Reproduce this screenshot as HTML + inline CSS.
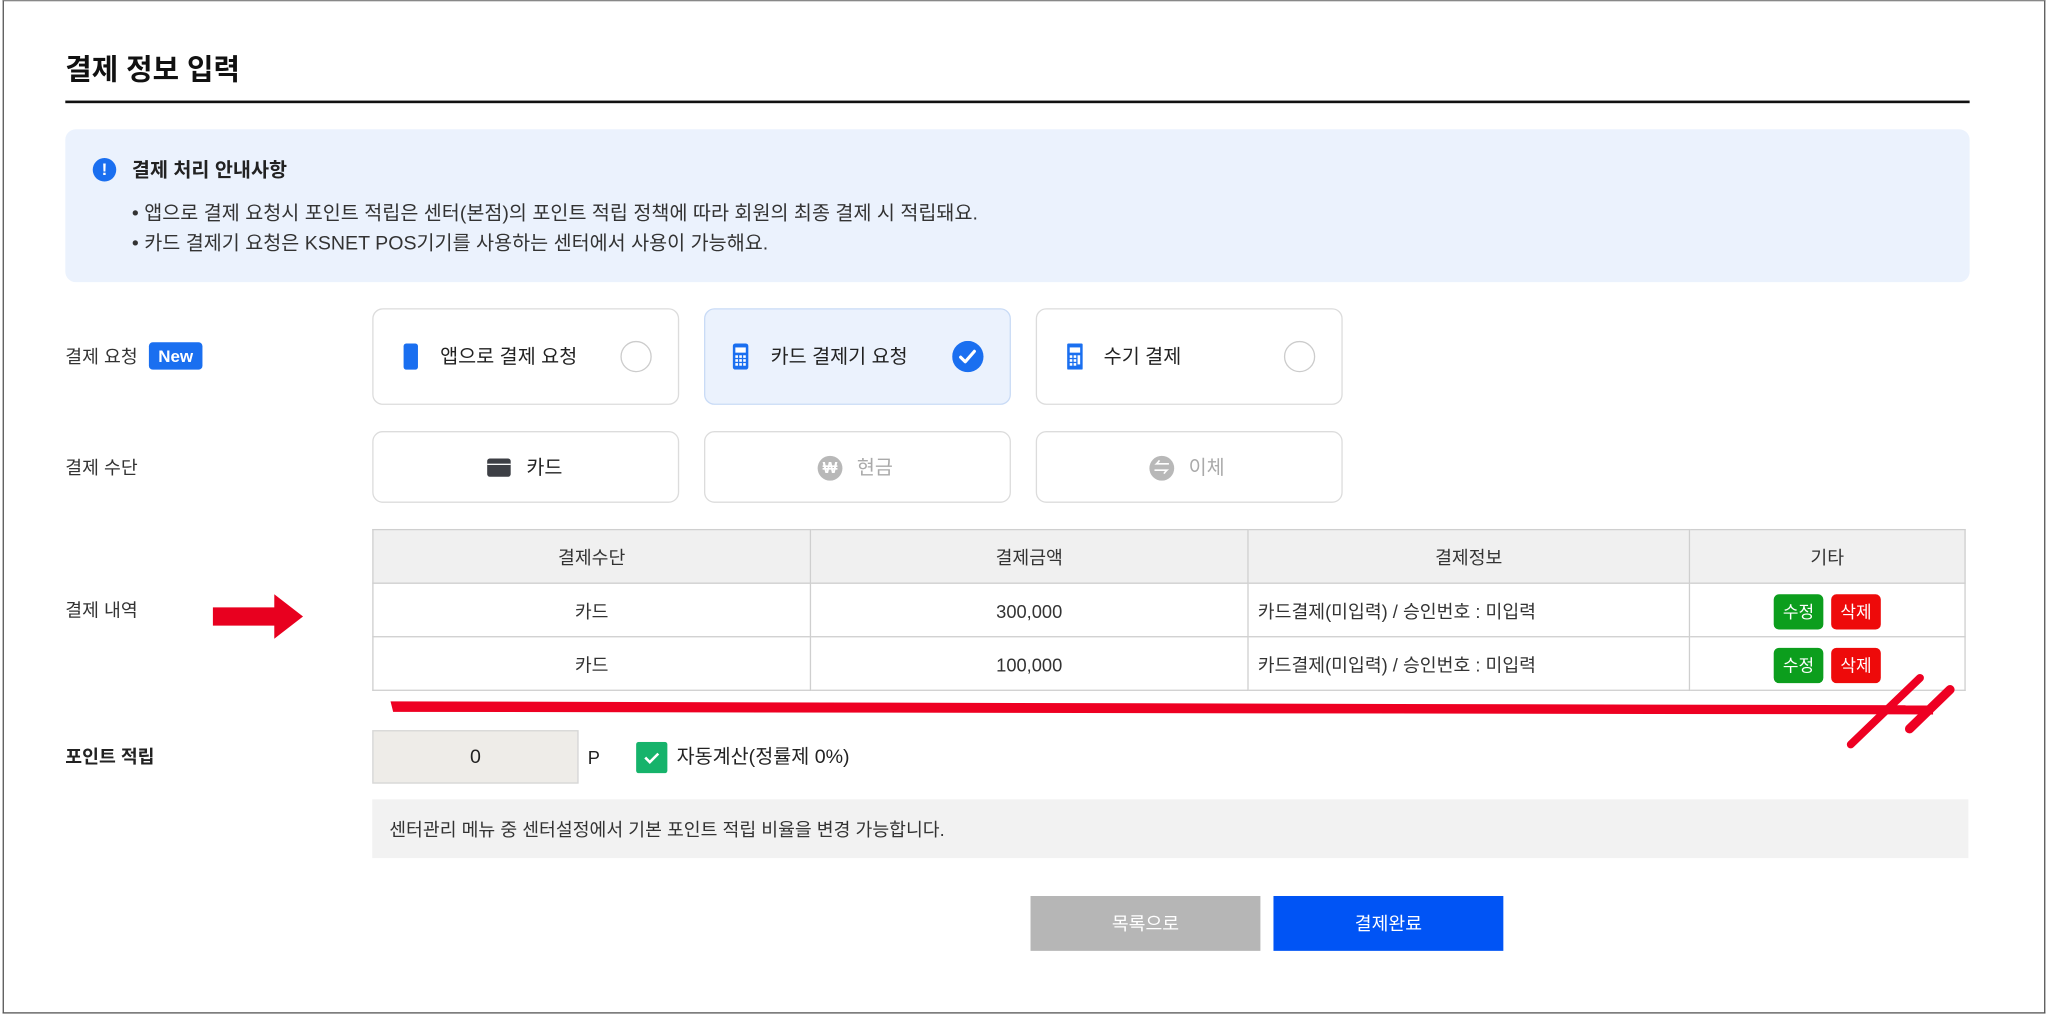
<!DOCTYPE html>
<html><head><meta charset="utf-8">
<style>
*{box-sizing:border-box;margin:0;padding:0}
html,body{width:2048px;height:1019px;overflow:hidden;background:#fff}
#w{position:absolute;left:0;top:0;width:1568px;height:780px;transform:scale(1.30612);transform-origin:0 0;font-family:"Liberation Sans","Noto Sans CJK KR",sans-serif;color:#222}
.a{position:absolute}
.t{white-space:nowrap;line-height:1}
.card{position:absolute;border:1px solid #dcdcdc;border-radius:8px;background:#fff}
.lbl{position:absolute;left:50px;font-size:14px;color:#333;white-space:nowrap;line-height:1}
table{position:absolute;left:285px;top:405px;width:1220px;border-collapse:collapse;font-size:14px;color:#333}
td,th{border:1px solid #cfcfcf;height:41px;text-align:center;font-weight:normal;padding-top:2px}
th{background:#f0f0f0}
.b{display:inline-block;width:38px;height:27px;line-height:27px;border-radius:4px;color:#fff;font-size:13px;margin:0 3px}
</style></head><body><div id="w">
<div class="a" style="left:2px;top:0;width:1564px;height:776px;border:1px solid #555;border-top-color:#888"></div>
<div class="a t" style="left:50px;top:43px;font-size:22px;font-weight:bold;color:#111">결제 정보 입력</div>
<div class="a" style="left:50px;top:77px;width:1458px;height:2px;background:#111"></div>

<div class="a" style="left:50px;top:99px;width:1458px;height:117px;background:#ebf2fd;border-radius:8px"></div>
<div class="a" style="left:71px;top:121px;width:18px;height:18px;border-radius:50%;background:#1a6ff0;color:#fff;font-size:13px;font-weight:bold;text-align:center;line-height:18px">!</div>
<div class="a t" style="left:101px;top:123px;font-size:15px;font-weight:bold;color:#222">결제 처리 안내사항</div>
<div class="a t" style="left:101px;top:156px;font-size:15px;color:#333">• 앱으로 결제 요청시 포인트 적립은 센터(본점)의 포인트 적립 정책에 따라 회원의 최종 결제 시 적립돼요.</div>
<div class="a t" style="left:101px;top:179px;font-size:15px;color:#333">• 카드 결제기 요청은 KSNET POS기기를 사용하는 센터에서 사용이 가능해요.</div>

<div class="lbl" style="top:266px">결제 요청</div>
<div class="a t" style="left:114px;top:262px;width:41px;height:21px;background:#1a6ff0;border-radius:3px;color:#fff;font-size:13px;font-weight:bold;text-align:center;line-height:21px">New</div>

<div class="card" style="left:285px;top:236px;width:235px;height:74px"></div>
<div class="a" style="left:309px;top:263px;width:11px;height:20px;background:#1a6ff0;border-radius:2px"></div>
<div class="a t" style="left:337px;top:266px;font-size:15px;color:#222">앱으로 결제 요청</div>
<div class="a" style="left:475px;top:261px;width:24px;height:24px;border-radius:50%;border:1px solid #ccc"></div>

<div class="card" style="left:539px;top:236px;width:235px;height:74px;background:#ebf2fd;border-color:#c9dbf6"></div>
<svg class="a" style="left:561px;top:263px" width="12" height="20"><rect width="12" height="20" rx="2" fill="#1a6ff0"/><rect x="2" y="3" width="8" height="4" fill="#fff"/><g fill="#fff"><rect x="2" y="9" width="2" height="2"/><rect x="5" y="9" width="2" height="2"/><rect x="8" y="9" width="2" height="2"/><rect x="2" y="12" width="2" height="2"/><rect x="5" y="12" width="2" height="2"/><rect x="8" y="12" width="2" height="2"/><rect x="2" y="15" width="2" height="2"/><rect x="5" y="15" width="2" height="2"/><rect x="8" y="15" width="2" height="2"/></g></svg>
<div class="a t" style="left:590px;top:266px;font-size:15px;color:#222">카드 결제기 요청</div>
<svg class="a" style="left:729px;top:261px" width="24" height="24"><circle cx="12" cy="12" r="12" fill="#1a6ff0"/><path d="M6.5 12.5l3.5 3.5 7-8" stroke="#fff" stroke-width="2.4" fill="none" stroke-linecap="round" stroke-linejoin="round"/></svg>

<div class="card" style="left:793px;top:236px;width:235px;height:74px"></div>
<svg class="a" style="left:817px;top:263px" width="12" height="20"><rect width="12" height="20" rx="1" fill="#1a6ff0"/><rect x="2" y="3" width="8" height="4" fill="#fff"/><g fill="#fff"><rect x="2" y="9" width="2" height="2"/><rect x="5" y="9" width="2" height="2"/><rect x="8" y="9" width="2" height="7"/><rect x="2" y="12" width="2" height="2"/><rect x="5" y="12" width="2" height="2"/><rect x="2" y="15" width="2" height="2"/><rect x="5" y="15" width="2" height="2"/></g></svg>
<div class="a t" style="left:845px;top:266px;font-size:15px;color:#222">수기 결제</div>
<div class="a" style="left:983px;top:261px;width:24px;height:24px;border-radius:50%;border:1px solid #ccc"></div>

<div class="lbl" style="top:351px">결제 수단</div>
<div class="card" style="left:285px;top:330px;width:235px;height:55px"></div>
<div class="a" style="left:373px;top:351px;width:18px;height:14px;background:#3d3f45;border-radius:2px"></div>
<div class="a" style="left:373px;top:355px;width:18px;height:1px;background:#fff"></div>
<div class="a t" style="left:403px;top:351px;font-size:15px;color:#222">카드</div>
<div class="card" style="left:539px;top:330px;width:235px;height:55px"></div>
<div class="a" style="left:626px;top:349px;width:19px;height:19px;border-radius:50%;background:#b8b8b8;color:#fff;font-size:12px;font-weight:bold;text-align:center;line-height:19px">₩</div>
<div class="a t" style="left:656px;top:351px;font-size:15px;color:#aaa">현금</div>
<div class="card" style="left:793px;top:330px;width:235px;height:55px"></div>
<div class="a" style="left:880px;top:349px;width:19px;height:19px;border-radius:50%;background:#b8b8b8;color:#fff;font-size:12px;font-weight:bold;text-align:center;line-height:19px">⇋</div>
<div class="a t" style="left:910px;top:351px;font-size:15px;color:#aaa">이체</div>

<div class="lbl" style="top:460px">결제 내역</div>
<svg class="a" style="left:160px;top:453px" width="75" height="38"><path d="M3 12h47v-10l22 17-22 17v-10H3z" fill="#e8001f"/></svg>
<table>
<tr><th style="width:335px">결제수단</th><th style="width:335px">결제금액</th><th style="width:338px">결제정보</th><th>기타</th></tr>
<tr><td>카드</td><td>300,000</td><td style="text-align:left;padding-left:7px">카드결제(미입력) / 승인번호 : 미입력</td><td><span class="b" style="background:#0c9e1d">수정</span><span class="b" style="background:#ee0a0a">삭제</span></td></tr>
<tr><td>카드</td><td>100,000</td><td style="text-align:left;padding-left:7px">카드결제(미입력) / 승인번호 : 미입력</td><td><span class="b" style="background:#0c9e1d">수정</span><span class="b" style="background:#ee0a0a">삭제</span></td></tr>
</table>
<svg class="a" style="left:295px;top:510px" width="1210" height="65"><path d="M4 27 L1185 30 L1185 37 L6 35 Z" fill="#ee0022"/><path d="M1122 60 L1175 9" stroke="#ee0022" stroke-width="6" stroke-linecap="round"/><path d="M1167 48 L1198 18" stroke="#ee0022" stroke-width="7" stroke-linecap="round"/></svg>

<div class="lbl" style="top:572px;font-weight:bold;color:#222">포인트 적립</div>
<div class="a t" style="left:285px;top:559px;width:158px;height:41px;background:#eeece8;border:1px solid #d6d6d6;font-size:15px;text-align:center;line-height:40px">0</div>
<div class="a t" style="left:450px;top:573px;font-size:14px">P</div>
<svg class="a" style="left:487px;top:568px" width="24" height="24"><rect width="24" height="24" rx="2" fill="#16b36b"/><path d="M7 12l3.5 3.5L17 9" stroke="#fff" stroke-width="2" fill="none"/></svg>
<div class="a t" style="left:518px;top:572px;font-size:15px;color:#222">자동계산(정률제 0%)</div>
<div class="a" style="left:285px;top:612px;width:1222px;height:45px;background:#f2f2f2"></div>
<div class="a t" style="left:298px;top:628px;font-size:14px;color:#333">센터관리 메뉴 중 센터설정에서 기본 포인트 적립 비율을 변경 가능합니다.</div>

<div class="a t" style="left:789px;top:686px;width:176px;height:42px;background:#b6b6b6;color:#fff;font-size:14px;text-align:center;line-height:43px">목록으로</div>
<div class="a t" style="left:975px;top:686px;width:176px;height:42px;background:#0054f5;color:#fff;font-size:14px;text-align:center;line-height:43px">결제완료</div>
</div></body></html>
